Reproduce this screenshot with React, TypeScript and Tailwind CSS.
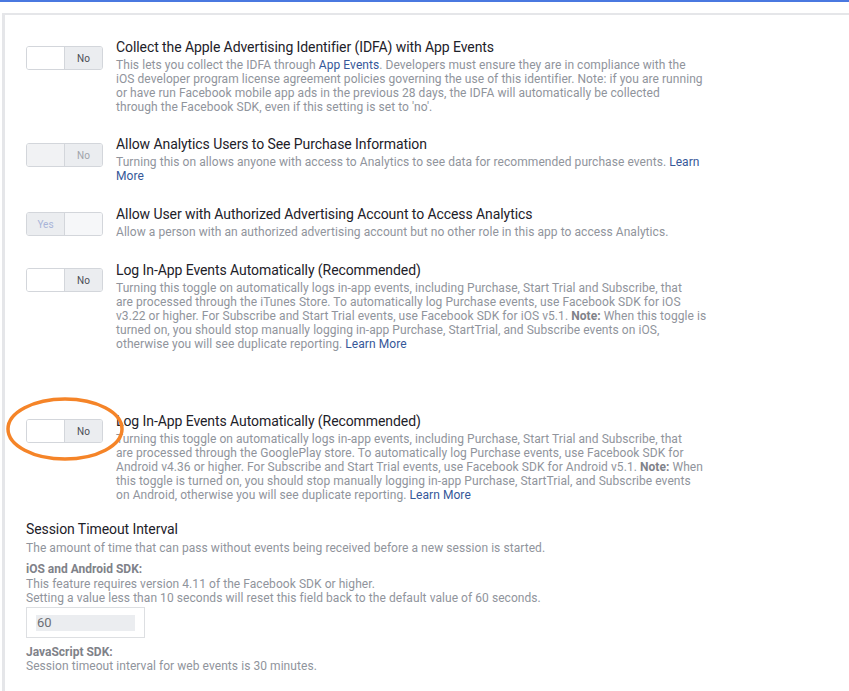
import React from "react";

function Toggle({ state, disabled }: { state: "no" | "yes"; disabled?: boolean }) {
  if (state === "yes") {
    return (
      <div className="flex h-[24px] w-[77px] shrink-0 rounded-[3px] border border-[#d3d6db] overflow-hidden">
        <div className="flex w-[38px] items-center justify-center bg-[#ebedf0] text-[10px] text-[#a8b4d8] border-r border-[#d3d6db]">Yes</div>
        <div className="flex-1 bg-[#f6f7f9]" />
      </div>
    );
  }
  return (
    <div className="flex h-[24px] w-[77px] shrink-0 rounded-[3px] border border-[#d3d6db] overflow-hidden">
      <div className={`w-[38px] border-r border-[#d3d6db] ${disabled ? "bg-[#f1f2f4]" : "bg-white"}`} />
      <div className={`flex flex-1 items-center justify-center bg-[#ebedf0] text-[10px] ${disabled ? "text-[#a0a4ab]" : "text-[#4b4f56]"}`}>No</div>
    </div>
  );
}

function Row({
  toggle,
  title,
  children,
  className,
  toggleTop,
}: {
  toggle: React.ReactNode;
  title: string;
  children: React.ReactNode;
  className?: string;
  toggleTop?: string;
}) {
  return (
    <div className={`flex gap-[13px] ${className ?? ""}`}>
      <div className={toggleTop ?? "pt-[7px]"}>{toggle}</div>
      <div>
        <div className="whitespace-nowrap text-[14px] leading-[16px] tracking-[-0.08px] text-[#1d2129]">{title}</div>
        <div className="mt-[3px] whitespace-nowrap text-[12px] leading-[14px] tracking-[0.06px] text-[#90949c]">{children}</div>
      </div>
    </div>
  );
}

const Link = ({ children }: { children: React.ReactNode }) => (
  <span className="text-[#365899]">{children}</span>
);

export default function App() {
  return (
    <div className="h-[691px] w-[849px] overflow-hidden bg-white font-['Roboto',sans-serif]">
      <div className="h-[2px] bg-[#4a78e0]" />
      <div className="h-[11px]" />
      <div className="ml-[2px] min-h-[678px] border-l-[3px] border-t-[2px] border-[#e5e6e9] pl-[21px] pt-[24px]">
        <Row toggle={<Toggle state="no" />} title="Collect the Apple Advertising Identifier (IDFA) with App Events">
          This lets you collect the IDFA through <Link>App Events</Link>. Developers must ensure they are in compliance with the
          <br />
          iOS developer program license agreement policies governing the use of this identifier. Note: if you are running
          <br />
          or have run Facebook mobile app ads in the previous 28 days, the IDFA will automatically be collected
          <br />
          through the Facebook SDK, even if this setting is set to 'no'.
        </Row>
        <Row className="mt-[22px]" toggle={<Toggle state="no" disabled />} title="Allow Analytics Users to See Purchase Information">
          Turning this on allows anyone with access to Analytics to see data for recommended purchase events. <Link>Learn</Link>
          <br />
          <Link>More</Link>
        </Row>
        <Row className="mt-[23px]" toggleTop="pt-[6px]" toggle={<Toggle state="yes" />} title="Allow User with Authorized Advertising Account to Access Analytics">
          Allow a person with an authorized advertising account but no other role in this app to access Analytics.
        </Row>
        <Row className="mt-[23px]" toggleTop="pt-[6px]" toggle={<Toggle state="no" />} title="Log In-App Events Automatically (Recommended)">
          Turning this toggle on automatically logs in-app events, including Purchase, Start Trial and Subscribe, that
          <br />
          are processed through the iTunes Store. To automatically log Purchase events, use Facebook SDK for iOS
          <br />
          v3.22 or higher. For Subscribe and Start Trial events, use Facebook SDK for iOS v5.1. <b className="text-[#7f8289]">Note:</b> When this toggle is
          <br />
          turned on, you should stop manually logging in-app Purchase, StartTrial, and Subscribe events on iOS,
          <br />
          otherwise you will see duplicate reporting. <Link>Learn More</Link>
        </Row>
        <div className="relative mt-[62px]">
          <Row toggleTop="pt-[6px]" toggle={<Toggle state="no" />} title="Log In-App Events Automatically (Recommended)">
            Turning this toggle on automatically logs in-app events, including Purchase, Start Trial and Subscribe, that
            <br />
            are processed through the GooglePlay store. To automatically log Purchase events, use Facebook SDK for
            <br />
            Android v4.36 or higher. For Subscribe and Start Trial events, use Facebook SDK for Android v5.1. <b className="text-[#7f8289]">Note:</b> When
            <br />
            this toggle is turned on, you should stop manually logging in-app Purchase, StartTrial, and Subscribe events
            <br />
            on Android, otherwise you will see duplicate reporting. <Link>Learn More</Link>
          </Row>
          <svg className="pointer-events-none absolute left-[-21px] top-[-17px]" width="124" height="68" viewBox="0 0 124 68">
            <ellipse cx="60" cy="33" rx="57" ry="30" fill="none" stroke="#f58428" strokeWidth="3.5" />
          </svg>
        </div>
        <div className="mt-[19px]">
          <div className="text-[14px] leading-[16px] tracking-[-0.08px] text-[#1d2129]">Session Timeout Interval</div>
          <div className="mt-[4px] text-[12px] leading-[14px] tracking-[0.06px] text-[#90949c]">
            The amount of time that can pass without events being received before a new session is started.
          </div>
          <div className="mt-[7px] text-[12px] font-bold leading-[14px] text-[#7f8289]">iOS and Android SDK:</div>
          <div className="mt-[1px] text-[12px] leading-[14px] tracking-[0.06px] text-[#90949c]">
            This feature requires version 4.11 of the Facebook SDK or higher.
            <br />
            Setting a value less than 10 seconds will reset this field back to the default value of 60 seconds.
          </div>
          <div className="mt-[2px] flex h-[31px] w-[119px] items-center border border-[#dddfe2] px-[9px]">
            <div className="flex h-[16px] w-full items-center bg-[#ebedf0] px-[1px] text-[13px] text-[#6b6f75]">60</div>
          </div>
          <div className="mt-[7px] text-[12px] font-bold leading-[14px] text-[#7f8289]">JavaScript SDK:</div>
          <div className="mt-0 text-[12px] leading-[14px] tracking-[0.06px] text-[#90949c]">
            Session timeout interval for web events is 30 minutes.
          </div>
        </div>
      </div>
    </div>
  );
}
